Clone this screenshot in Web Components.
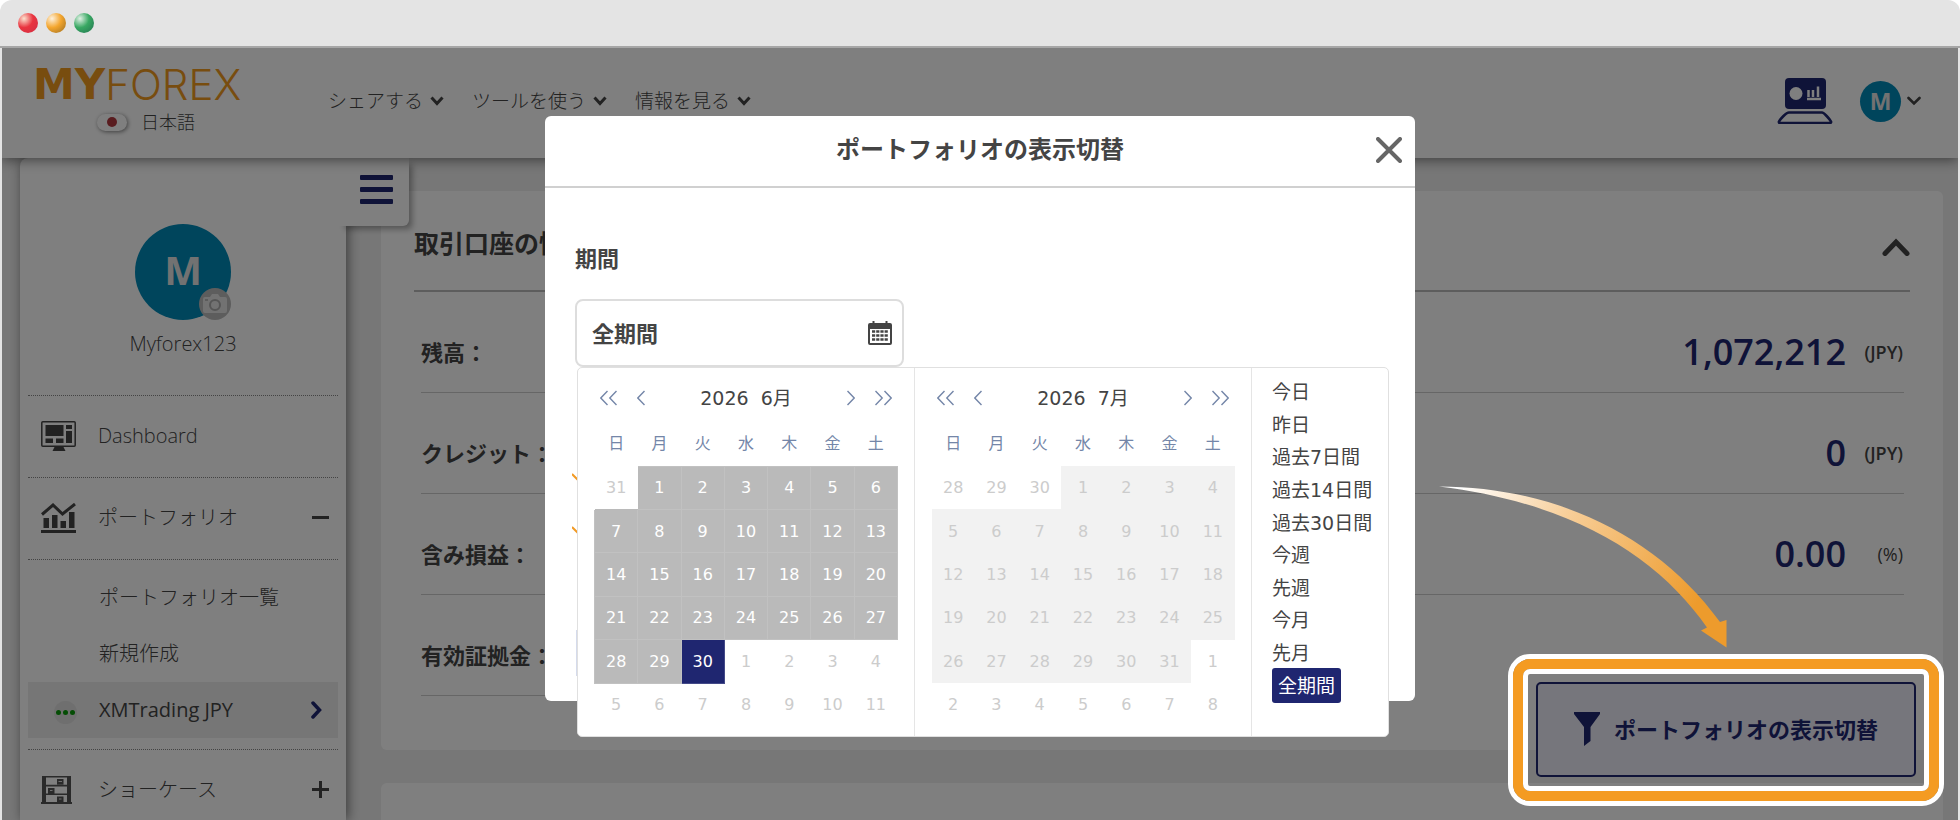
<!DOCTYPE html>
<html lang="ja">
<head>
<meta charset="utf-8">
<title>MYFOREX</title>
<style>
html, body { margin: 0; height: 100%; background: #fff; }
body {
  font-family: "Open Sans", "Noto Sans CJK JP", sans-serif;
  color: #444;
  --navy: #1f2670;
  --teal: #008ab8;
  --line: #ccc;
}
</style>
</head>
<body>
<browser-frame>
  <app-header></app-header>
  <app-layout>
    <side-bar slot="side"></side-bar>
    <account-card></account-card>
    <blank-card></blank-card>
    <filter-button slot="float"></filter-button>
  </app-layout>
  <portfolio-dialog slot="dialog"></portfolio-dialog>
  <guide-marks slot="guide"></guide-marks>
</browser-frame>

<script>
const BASE = `<style>
:host, *, *::before { box-sizing: border-box; }
button { font: inherit; color: inherit; background: none; border: 0; padding: 0; margin: 0; cursor: pointer; }
a { color: inherit; text-decoration: none; }
svg { display: block; flex: none; }
h2, dl, dd, ul, p { margin: 0; padding: 0; }
ul { list-style: none; }
</style>`;

function define(name, html) {
  customElements.define(name, class extends HTMLElement {
    constructor() {
      super();
      const t = document.createElement('template');
      t.innerHTML = BASE + (typeof html === 'function' ? html(this) : html);
      this.attachShadow({ mode: 'open' }).append(t.content.cloneNode(true));
    }
  });
}

define('browser-frame', `
<style>
:host { display: flex; flex-direction: column; height: 100vh; overflow: hidden; background: #e4e4e4; border-radius: 12px 12px 0 0; }
.bar { display: flex; align-items: center; gap: 8px; height: 48px; flex: none; padding-left: 18px; border-bottom: 2px solid #a6a6a6; }
.bar i { width: 20px; height: 20px; border-radius: 50%; }
.r { background: radial-gradient(circle at 30% 28%, #fbe3cf, #e9343f 45%, #cf2f45); }
.y { background: radial-gradient(circle at 30% 28%, #fdf0dc, #f4a62e 45%, #c18628 75%, #f0a32c); }
.g { background: radial-gradient(circle at 30% 28%, #dff0e4, #38a862 45%, #2c8a58 75%, #35a05e); }
.page { position: relative; flex: 1; min-height: 0; margin: 0 2px; display: flex; flex-direction: column; background: #eee; overflow: hidden; }
.dim { position: absolute; inset: 0; z-index: 5; background: rgba(0,0,0,.5); display: flex; justify-content: center; align-items: flex-start; padding-top: 68px; }
</style>
<div class="bar"><i class="r"></i><i class="y"></i><i class="g"></i></div>
<div class="page">
  <slot></slot>
  <div class="dim"><slot name="dialog"></slot></div>
  <slot name="guide"></slot>
</div>`);

define('nav-menu', `
<style>
:host { display: block; }
button { display: flex; align-items: center; gap: 7px; font-size: 19px; line-height: 28px; font-weight: 300; }
</style>
<button type="button"><slot></slot><svg width="14" height="10" viewBox="0 0 14 10"><path d="M1.5 1.5 7 7.5l5.5-6" fill="none" stroke="currentColor" stroke-width="3"/></svg></button>`);

define('app-header', `
<style>
:host { position: relative; z-index: 2; display: flex; align-items: center; height: 110px; flex: none; background: #fff; box-shadow: 0 2px 12px rgba(0,0,0,.5); padding: 0 37px 4px 31px; }
.brand { width: 230px; display: flex; flex-direction: column; gap: 6px; }
.logo { display: flex; align-items: center; height: 36px; color: #f09a1f; font-family: Inter, sans-serif; font-size: 42px; line-height: 36px; font-weight: 300; }
.logo b { font-family: "DejaVu Sans", sans-serif; font-size: 42px; font-weight: 700; }
.lang { display: flex; align-items: center; gap: 14px; margin-left: 64px; font-size: 18px; line-height: 26px; font-weight: 300; }
.flag { width: 30px; height: 17px; border-radius: 9px; background: #fff; box-shadow: 1px 1px 4px rgba(0,0,0,.5); display: flex; align-items: center; justify-content: center; }
.flag::before { content: ""; width: 10px; height: 10px; border-radius: 50%; background: #b3383f; }
nav { display: flex; gap: 28px; margin-left: 65px; flex: 1; }
.laptop { color: var(--navy); }
.me { display: flex; align-items: center; gap: 6px; margin-left: 27px; }
.av { width: 41px; height: 41px; border-radius: 50%; background: var(--teal); color: #e4e4e4; display: flex; align-items: center; justify-content: center; font-size: 23px; font-weight: 700; }
</style>
<div class="brand">
  <a class="logo" href="#"><b>MY</b>FOREX</a>
  <button class="lang" type="button"><span class="flag"></span>日本語</button>
</div>
<nav><nav-menu>シェアする</nav-menu><nav-menu>ツールを使う</nav-menu><nav-menu>情報を見る</nav-menu></nav>
<a class="laptop" href="#" aria-label="MT4"><svg width="56" height="46" viewBox="0 0 56 46">
  <rect x="8" width="41" height="31" rx="4" fill="currentColor"/>
  <circle cx="19" cy="15.500" r="6.500" fill="#fff"/>
  <path d="M31.500 12v7M36 12v7M41 8.500v10.500M30 21h14" stroke="#fff" stroke-width="2.500" fill="none"/>
  <path d="M12 34.500h33c2 0 8 7 9 9 .3.800-.2 1.500-1 1.500H3c-1 0-1.300-.7-1-1.500 1-2 7-9 10-9z" fill="#fff" fill-opacity=".4" stroke="currentColor" stroke-width="2.600"/>
</svg></a>
<button class="me" type="button"><span class="av">M</span><svg width="14" height="10" viewBox="0 0 14 10"><path d="M1.500 2 7 7.500 12.500 2" fill="none" stroke="currentColor" stroke-width="2.600" stroke-linecap="round"/></svg></button>`);

define('app-layout', `
<style>
:host { position: relative; display: flex; flex: 1; min-height: 0; padding-left: 18px; background: #efefef; }
main { flex: 1; min-width: 0; display: flex; flex-direction: column; gap: 33px; padding: 33px 15px 0 35px; }
</style>
<slot name="side"></slot>
<main><slot></slot></main>
<slot name="float"></slot>`);

define('side-link', el => `
<style>
:host { display: block; }
a { display: flex; align-items: center; height: 82px; padding: 0 9px 2px 13px; border-top: 1px dotted #888; font-size: 20px; line-height: 28px; font-weight: 300; }
.i { display: flex; width: 57px; }
.t { flex: 1; }
</style>
<a href="#"><span class="i"><slot name="icon"></slot></span><span class="t"><slot></slot></span><slot name="end"></slot></a>`);

define('sub-link', el => `
<style>
:host { display: block; }
a { display: flex; align-items: center; height: 56px; padding: 0 16px 0 26px; font-size: 20px; line-height: 28px; font-weight: 300; ${el.hasAttribute('current') ? 'background: #ececec; font-weight: 400;' : ''} }
.i { display: flex; width: 45px; }
.t { flex: 1; }
svg { color: var(--navy); }
</style>
<a href="#"><span class="i"><slot name="icon"></slot></span><span class="t"><slot></slot></span>${el.hasAttribute('current') ? '<svg width="11" height="18" viewBox="0 0 11 18"><path d="m2 2 6.500 7L2 16" fill="none" stroke="currentColor" stroke-width="3.500" stroke-linecap="round"/></svg>' : ''}</a>`);

define('side-bar', `
<style>
:host { position: relative; z-index: 1; display: block; width: 326px; flex: none; background: #fff; box-shadow: 2px 0 12px rgba(0,0,0,.5); padding: 0 8px; border-radius: 8px 0 0 0; }
.tab { position: absolute; top: 0; right: -63px; width: 71px; height: 68px; background: #fff; border-radius: 0 0 6px 0; box-shadow: 5px 5px 6px -2px rgba(0,0,0,.35); display: flex; flex-direction: column; justify-content: center; align-items: center; gap: 7px; padding: 0 0 6px 5px; }
.tab i { width: 33px; height: 5px; border-radius: 1px; background: var(--navy); }
.profile { height: 237px; padding-top: 66px; display: flex; flex-direction: column; align-items: center; gap: 10px; font-size: 20px; line-height: 28px; font-weight: 300; }
.av { position: relative; width: 96px; height: 96px; border-radius: 50%; background: var(--teal); color: #e4e4e4; display: flex; align-items: center; justify-content: center; font-size: 40px; font-weight: 700; padding-bottom: 4px; }
.cam { position: absolute; right: 0; bottom: 0; width: 32px; height: 32px; border-radius: 50%; background: #bbb; display: flex; align-items: center; justify-content: center; }
.subs { border-top: 1px dotted #888; padding: 10px 0 11px; }
.xm { width: 23px; height: 23px; border-radius: 50%; background: #dedede; display: flex; align-items: center; justify-content: center; gap: 2px; margin-top: 5px; }
.xm i { width: 5px; height: 5px; border-radius: 50%; background: #0a9a0a; }
</style>
<button class="tab" type="button" aria-label="メニュー"><i></i><i></i><i></i></button>
<div class="profile">
  <div class="av">M<button class="cam" type="button" aria-label="写真を変更"><svg width="24" height="20" viewBox="0 0 24 20"><path d="M2 3h5l2-3h6l2 3h5a2 2 0 0 1 2 2v12a2 2 0 0 1-2 2H2a2 2 0 0 1-2-2V5a2 2 0 0 1 2-2z" fill="#e4e4e4"/><circle cx="12" cy="11" r="5" fill="#e4e4e4" stroke="#aaa" stroke-width="2"/><path d="M2 6h3" stroke="#aaa" stroke-width="1.500"/></svg></button></div>
  <span>Myforex123</span>
</div>
<nav>
  <side-link>
    <svg slot="icon" width="35" height="30" viewBox="0 0 35 30"><rect x=".8" y=".8" width="33.400" height="24.400" rx="1" fill="none" stroke="#444" stroke-width="1.500"/><path d="M4.500 4h18v11h-18zM25 4h6v4h-6zM25 10h6v12h-6zM4.500 17.500h7.500V22H4.500zM15 17.500h7.500V22H15zM13.500 26h9l2 4h-13z" fill="#444"/></svg>
    Dashboard
  </side-link>
  <side-link>
    <svg slot="icon" width="35" height="30" viewBox="0 0 35 30"><path d="M1 11.500 12 2l9.500 9L34 1" fill="none" stroke="#444" stroke-width="3"/><path d="M2.500 15H8v10H2.500zM11 12h5.500v13H11zM19.500 18H25v7h-5.500zM28 9h5.500v16H28zM0 27h35v3H0z" fill="#444"/></svg>
    ポートフォリオ
    <svg slot="end" width="17" height="17" viewBox="0 0 17 17"><path d="M0 8.500h17" stroke="#444" stroke-width="3"/></svg>
  </side-link>
  <div class="subs">
    <sub-link>ポートフォリオ一覧</sub-link>
    <sub-link>新規作成</sub-link>
    <sub-link current><span slot="icon" class="xm"><i></i><i></i><i></i></span>XMTrading JPY</sub-link>
  </div>
  <side-link>
    <svg slot="icon" width="31" height="28" viewBox="0 0 31 28"><path d="M1 0h4v27H1zM26 0h4v27h-4zM0 26h31v2H0zM1 0h29v1.500H1zM4 8.800h22v1.600H4zM4 17.500h22v1.600H4zM16 3h6.500v5.500H16zM7 12h6.500v5.500H7zM16 20.500h6.500V26H16z" fill="#555"/><path d="M17.500 5.500h3.500M9 14.500h2.500M18 23h2.500" stroke="#ddd"/></svg>
    ショーケース
    <svg slot="end" width="17" height="17" viewBox="0 0 17 17"><path d="M0 8.500h17M8.500 0v17" stroke="#444" stroke-width="3"/></svg>
  </side-link>
</nav>`);

define('amount-row', el => `
<style>
:host { display: flex; align-items: center; height: 101px; padding-top: 20px; border-bottom: 1px solid var(--line); }
.l { flex: 1; font-size: 22px; line-height: 32px; font-weight: 700; }
.v { color: var(--navy); font-size: 36px; line-height: 48px; font-weight: 600; }
.u { width: 58px; padding-right: 1px; text-align: right; font-size: 18px; line-height: 24px; font-weight: ${el.hasAttribute('plain') ? 400 : 600}; }
</style>
<span class="l"><slot></slot></span>
<span class="v"><slot name="value"></slot></span>
<span class="u"><slot name="unit"></slot></span>`);

define('account-card', `
<style>
:host { display: block; background: #fff; border-radius: 6px; padding: 0 33px 54px; }
header { display: flex; align-items: center; justify-content: space-between; height: 101px; padding-top: 4px; border-bottom: 2px solid #bbb; }
header svg { margin-top: 8px; }
h2 { font-size: 25px; line-height: 36px; font-weight: 700; }
section { padding: 0 6px 0 7px; }
.half { width: 50%; }
</style>
<header><h2>取引口座の情報</h2><button type="button" aria-label="閉じる"><svg width="28" height="18" viewBox="0 0 28 18"><path d="M3 15.500 14 4l11 11.500" fill="none" stroke="currentColor" stroke-width="5" stroke-linecap="round"/></svg></button></header>
<section>
  <amount-row>残高：<span slot="value">1,072,212</span><span slot="unit">(JPY)</span></amount-row>
  <amount-row>クレジット：<span slot="value">0</span><span slot="unit">(JPY)</span></amount-row>
  <amount-row plain>含み損益：<span slot="value">0.00</span><span slot="unit">(%)</span></amount-row>
  <amount-row class="half">有効証拠金：</amount-row>
</section>`);

define('blank-card', `<style>:host { display: block; flex: 1 0 60px; background: #fff; border-radius: 6px 6px 0 0; }</style>`);

define('filter-button', `
<style>
:host { position: absolute; right: 42px; top: 524px; z-index: 1; width: 380px; }
button { display: flex; align-items: center; justify-content: center; gap: 14px; width: 100%; height: 95px; border: 2px solid var(--navy); border-radius: 5px; background: #ecedf8; color: var(--navy); font-size: 22px; line-height: 32px; font-weight: 700; padding-bottom: 2px; }
</style>
<button type="button"><svg width="26" height="34" viewBox="0 0 26 34"><path d="M0 0h26v2l-9.500 13v14L10 34V15L0 2z" fill="currentColor"/></svg>ポートフォリオの表示切替</button>`);

const chev = (dir, n) => {
  const w = n === 2 ? 17 : 8;
  const one = x => dir < 0 ? `M${x + 7.500} 1 ${x + .8} 8l6.700 7` : `M${x + .5} 1l6.700 7-6.700 7`;
  return `<svg width="${w}" height="16" viewBox="0 0 ${w} 16"><path d="${one(0)}${n === 2 ? one(9) : ''}" fill="none" stroke="currentColor" stroke-width="1.400"/></svg>`;
};

/* Month grid: six weeks from the Sunday on or before the 1st; "until" marks the end of the chosen range. */
define('month-panel', el => {
  const year = +el.getAttribute('year'), month = +el.getAttribute('month');
  const first = new Date(year, month - 1, 1);
  const start = new Date(year, month - 1, 1 - first.getDay());
  let rows = '';
  for (let r = 0; r < 6; r++) {
    rows += '<tr>';
    for (let c = 0; c < 7; c++) {
      const d = new Date(start.getFullYear(), start.getMonth(), start.getDate() + r * 7 + c);
      const own = d.getMonth() === month - 1;
      const cls = !own ? '' : el.hasAttribute('disabled') ? 'off' : d.getDate() === +el.getAttribute('until') ? 'end' : 'in';
      rows += `<td class="${cls}"><button type="button">${d.getDate()}</button></td>`;
    }
    rows += '</tr>';
  }
  return `
<style>
:host { display: block; width: 337px; padding: 8px 16px 9px; border-right: 1px solid #e5e5e5; font-family: "DejaVu Sans", "Noto Sans CJK JP", sans-serif; }
.head { display: flex; align-items: center; height: 44px; padding: 0 6px; color: #7486a8; }
.head span { flex: 1; text-align: center; font-size: 19px; line-height: 28px; color: #444; white-space: pre; }
.head button + button { margin-left: 20px; }
table { width: 100%; height: 307px; table-layout: fixed; border-collapse: collapse; }
th { height: 46px; padding: 0 0 2px; font-size: 16px; font-weight: 400; color: #7486a8; }
td { height: 43px; padding: 0; text-align: center; font-size: 16px; color: #ccc; border: 1px solid transparent; }
td button { display: block; width: 100%; }
.in { background: #bababa; color: #fff; border-color: #c1c1c1; }
.end { background: var(--navy); color: #fff; border-color: #444a88; }
.off { background: #f2f2f2; }
</style>
<div class="head"><button type="button" aria-label="前年">${chev(-1, 2)}</button><button type="button" aria-label="前月">${chev(-1, 1)}</button><span>${year}  ${month}月</span><button type="button" aria-label="翌月">${chev(1, 1)}</button><button type="button" aria-label="翌年">${chev(1, 2)}</button></div>
<table><thead><tr>${[...'日月火水木金土'].map(d => `<th>${d}</th>`).join('')}</tr></thead><tbody>${rows}</tbody></table>`;
});

define('range-picker', `
<style>
:host { display: flex; border: 1px solid #e0e0e0; border-radius: 5px; background: #fff; }
ul { display: grid; grid-auto-rows: 1fr; height: 326px; margin-top: 8px; padding: 0 12px 0 20px; font-family: "DejaVu Sans", "Noto Sans CJK JP", sans-serif; font-size: 19px; line-height: 28px; }
li { display: flex; align-items: center; min-height: 0; white-space: nowrap; }
li:last-child button { flex: none; height: 35px; padding: 0 6px; border-radius: 3px; background: var(--navy); color: #fff; }
</style>
<month-panel year="2026" month="6" until="30"></month-panel>
<month-panel year="2026" month="7" disabled></month-panel>
<ul>${['今日', '昨日', '過去7日間', '過去14日間', '過去30日間', '今週', '先週', '今月', '先月', '全期間'].map(t => `<li><button type="button">${t}</button></li>`).join('')}</ul>`);

define('portfolio-dialog', `
<style>
:host { display: block; width: 870px; background: #fff; border-radius: 6px; }
header { position: relative; display: flex; align-items: center; justify-content: center; height: 72px; border-bottom: 2px solid #d0d0d0; padding-bottom: 4px; }
h2 { font-size: 24px; line-height: 36px; font-weight: 700; }
header button { position: absolute; right: 13px; top: 21px; color: #666; }
.body { padding: 53px 30px 25px; }
label { display: block; font-size: 22px; line-height: 34px; font-weight: 700; margin-bottom: 24px; }
.field { position: relative; display: flex; align-items: center; width: 329px; height: 68px; border: 2px solid #ddd; border-radius: 8px; padding: 0 10px 0 15px; }
input { flex: 1; min-width: 0; border: 0; outline: 0; padding: 0; background: none; font: 700 22px/32px "Open Sans", "Noto Sans CJK JP", sans-serif; color: #444; }
range-picker { position: absolute; left: 0; top: 66px; z-index: 2; width: 812px; }
.folds { display: flex; flex-direction: column; gap: 41px; padding-top: 106px; margin-left: -3px; color: #f29a24; }
.box { margin: 92px 1px 0; height: 46px; width: 300px; border: 1px solid #d5dbec; }
</style>
<header><h2>ポートフォリオの表示切替</h2><button type="button" aria-label="閉じる"><svg width="26" height="26" viewBox="0 0 26 26"><path d="m2 2 22 22M24 2 2 24" stroke="currentColor" stroke-width="4" stroke-linecap="round"/></svg></button></header>
<div class="body">
  <label for="range">期間</label>
  <div class="field"><input id="range" value="全期間" readonly>
    <svg width="24" height="24" viewBox="0 0 24 24"><path d="M2 2h20a2 2 0 0 1 2 2v18a2 2 0 0 1-2 2H2a2 2 0 0 1-2-2V4a2 2 0 0 1 2-2zM2 8v14h20V8z" fill="#444" fill-rule="evenodd"/><path d="M5.500 0v4M18.500 0v4" stroke="#444" stroke-width="2"/><path d="M4 10.500h16M4 14.500h16M4 18.500h16" stroke="#444" stroke-width="2.600" stroke-dasharray="3.200 1"/></svg>
    <range-picker></range-picker>
  </div>
  <div class="folds">
    <svg width="16" height="12" viewBox="0 0 16 12"><path d="m0 1 8 8 8-8" fill="none" stroke="currentColor" stroke-width="2"/></svg>
    <svg width="16" height="12" viewBox="0 0 16 12"><path d="m0 1 8 8 8-8" fill="none" stroke="currentColor" stroke-width="2"/></svg>
  </div>
  <div class="box"></div>
</div>`);

define('guide-marks', `
<style>
:host { position: absolute; right: 14px; top: 438px; z-index: 6; width: 505px; height: 322px; pointer-events: none; }
.ring { position: absolute; right: 0; bottom: 2px; width: 436px; height: 152px; border: 5px solid #fff; border-radius: 22px; }
.ring::before { content: ""; position: absolute; inset: 0; border: 10px solid #f49b22; border-radius: 17px; }
.ring::after { content: ""; position: absolute; inset: 10px; border: 5px solid #fff; border-radius: 7px; }
</style>
<svg width="290" height="164" viewBox="1440 486 290 164"><defs><linearGradient id="g" gradientUnits="userSpaceOnUse" x1="1440" y1="486" x2="1720" y2="630"><stop offset=".06" stop-color="#fff"/><stop offset=".4" stop-color="#f8cf9a"/><stop offset=".9" stop-color="#ed9b2c"/></linearGradient></defs>
<path d="M1440 486.500C1560 487 1660 538 1721 622L1727.500 620V647.500L1702 630.500L1708 627.500C1660 558 1575 503 1440 486.500z" fill="url(#g)"/></svg>
<div class="ring"></div>`);
</script>
</body>
</html>
